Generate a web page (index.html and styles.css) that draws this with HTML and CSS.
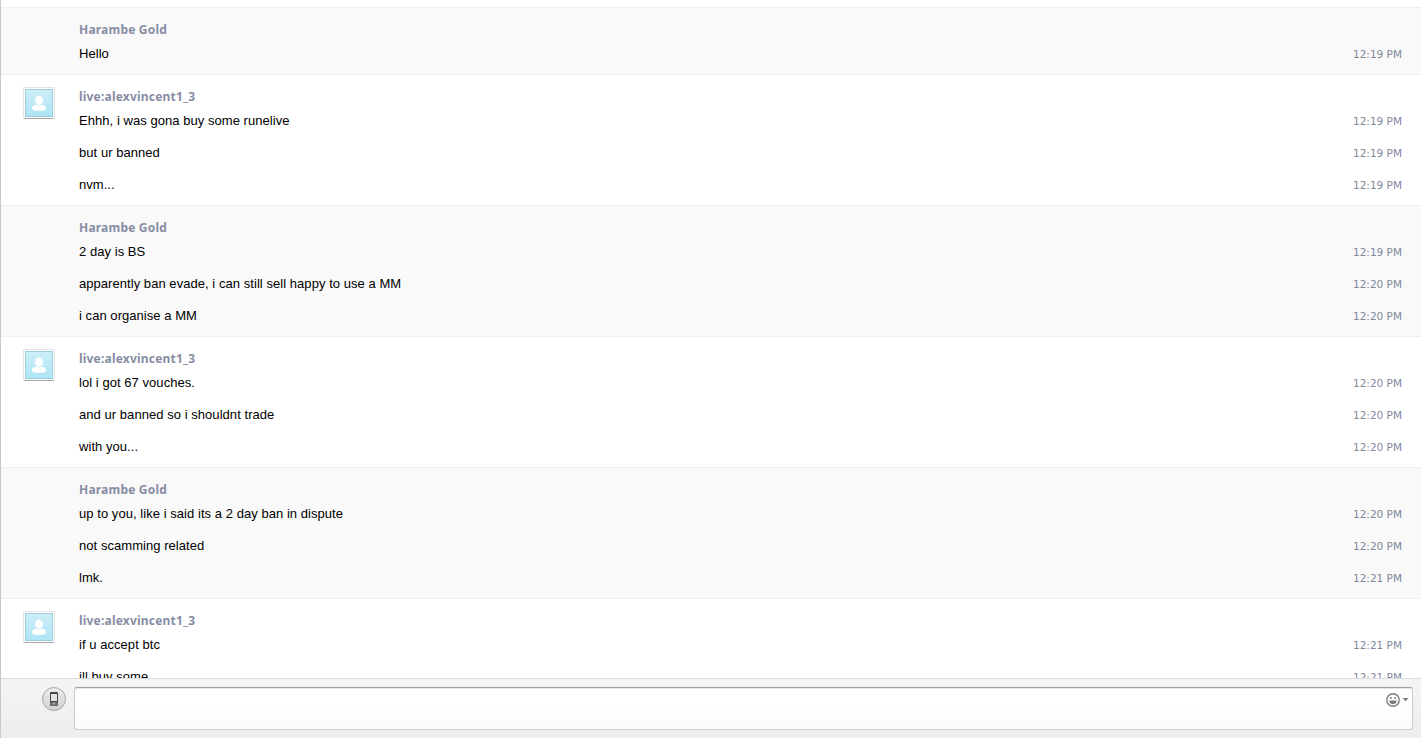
FILE: index.html
```html
<!DOCTYPE html>
<html>
<head>
  <meta charset="utf-8">
  <title>Chat</title>
  <link rel="stylesheet" href="styles.css">
</head>
<body>
  <svg class="symbols">
    <linearGradient id="sky" x1="0" y1="0" x2="0" y2="1">
      <stop offset="0" stop-color="#cdeef7"/>
      <stop offset="1" stop-color="#aee5f6"/>
    </linearGradient>
    <symbol id="person" viewBox="0 0 28 28">
      <rect x="0.5" y="0.5" width="27" height="27" fill="url(#sky)" stroke="#98cddb"/>
      <ellipse cx="14" cy="11.3" rx="4" ry="4.7" fill="#fff"/>
      <path d="M7 19.2c0-2.500 2.500-3.200 4.800-3.400 1.500 1 2.900 1 4.400 0 2.300.2 4.800.9 4.800 3.400 0 1.600-1.500 2.600-7 2.600s-7-1-7-2.600z" fill="#fff"/>
    </symbol>
  </svg>

  <div class="chat">
    <div class="messages">
      <div class="group other">
        <div class="avatar"></div>
        <div class="content">
          <div class="name">Harambe Gold</div>
          <div class="row"><span class="text">Hello</span><span class="time">12:19 PM</span></div>
        </div>
      </div>
      <div class="group">
        <div class="avatar"><svg class="photo"><use href="#person"/></svg></div>
        <div class="content">
          <div class="name">live:alexvincent1_3</div>
          <div class="row"><span class="text">Ehhh, i was gona buy some runelive</span><span class="time">12:19 PM</span></div>
          <div class="row"><span class="text">but ur banned</span><span class="time">12:19 PM</span></div>
          <div class="row"><span class="text">nvm...</span><span class="time">12:19 PM</span></div>
        </div>
      </div>
      <div class="group other">
        <div class="avatar"></div>
        <div class="content">
          <div class="name">Harambe Gold</div>
          <div class="row"><span class="text">2 day is BS</span><span class="time">12:19 PM</span></div>
          <div class="row"><span class="text">apparently ban evade, i can still sell happy to use a MM</span><span class="time">12:20 PM</span></div>
          <div class="row"><span class="text">i can organise a MM</span><span class="time">12:20 PM</span></div>
        </div>
      </div>
      <div class="group">
        <div class="avatar"><svg class="photo"><use href="#person"/></svg></div>
        <div class="content">
          <div class="name">live:alexvincent1_3</div>
          <div class="row"><span class="text">lol i got 67 vouches.</span><span class="time">12:20 PM</span></div>
          <div class="row"><span class="text">and ur banned so i shouldnt trade</span><span class="time">12:20 PM</span></div>
          <div class="row"><span class="text">with you...</span><span class="time">12:20 PM</span></div>
        </div>
      </div>
      <div class="group other">
        <div class="avatar"></div>
        <div class="content">
          <div class="name">Harambe Gold</div>
          <div class="row"><span class="text">up to you, like i said its a 2 day ban in dispute</span><span class="time">12:20 PM</span></div>
          <div class="row"><span class="text">not scamming related</span><span class="time">12:20 PM</span></div>
          <div class="row"><span class="text">lmk.</span><span class="time">12:21 PM</span></div>
        </div>
      </div>
      <div class="group">
        <div class="avatar"><svg class="photo"><use href="#person"/></svg></div>
        <div class="content">
          <div class="name">live:alexvincent1_3</div>
          <div class="row"><span class="text">if u accept btc</span><span class="time">12:21 PM</span></div>
          <div class="row"><span class="text">ill buy some</span><span class="time">12:21 PM</span></div>
        </div>
      </div>
    </div>

    <div class="composer">
      <button class="phone">
        <svg width="8" height="14" viewBox="0 0 8 14">
          <rect width="8" height="14" rx="1.300" fill="#454545"/>
          <rect x="1" y="2" width="6" height="7" fill="#e2e2e2"/>
          <rect y="10" width="8" height="4" rx="1" fill="#6c6c6c"/>
          <circle cx="4" cy="11.500" r="1" fill="#bbb"/>
        </svg>
      </button>
      <div class="input">
        <svg width="23" height="14" viewBox="0 0 23 14">
          <circle cx="7" cy="7" r="6.200" fill="none" stroke="#7c7c7c" stroke-width="1.400"/>
          <circle cx="4.900" cy="4.900" r="1" fill="#7c7c7c"/>
          <circle cx="9.100" cy="4.900" r="1" fill="#7c7c7c"/>
          <path d="M3.300 7.500h7.400c0 2.200-1.600 3.700-3.700 3.700s-3.700-1.500-3.700-3.700z" fill="#7c7c7c"/>
          <path d="M16.500 5h6l-3 3.300z" fill="#7c7c7c"/>
        </svg>
      </div>
    </div>
  </div>
</body>
</html>
```

FILE: styles.css
```css
body {
  margin: 0;
  background-color: #fff;
  font-family: "Liberation Sans", Arial, sans-serif;
}

.symbols {
  display: block;
  width: 0;
  height: 0;
}

.chat {
  display: flex;
  flex-direction: column;
  box-sizing: border-box;
  height: 738px;
  border-left: 1px solid #c8c8c8;
  overflow: hidden;
}

.messages {
  flex: 1;
  min-height: 0;
  padding-top: 7px;
  box-sizing: border-box;
  overflow: hidden;
}

.group {
  display: flex;
  border-top: 1px solid #eee;
  padding-bottom: 4px;
}

.group.other {
  background-color: #f9f9f9;
}

.avatar {
  flex: none;
  width: 56px;
  padding: 12px 0 0 22px;
  box-sizing: border-box;
  margin-right: 22px;
}

.photo {
  display: block;
  width: 28px;
  height: 28px;
  padding: 1px;
  background-color: #fff;
  border: 1px solid #e4e4e4;
  border-bottom-color: #a8a8a8;
  border-radius: 2px;
}

.content {
  flex: 1;
  padding-right: 19px;
}

.name {
  height: 30px;
  line-height: 43px;
  font-family: "Noto Sans", sans-serif;
  font-size: 12px;
  font-weight: bold;
  letter-spacing: 0.2px;
  color: #868da3;
}

.row {
  display: flex;
  justify-content: space-between;
  height: 32px;
  line-height: 32px;
}

.text {
  font-size: 13px;
  letter-spacing: 0.05px;
  color: #000;
}

.time {
  font-family: "DejaVu Sans", sans-serif;
  font-size: 10.5px;
  color: #7f879b;
}

.composer {
  flex: none;
  display: flex;
  align-items: flex-start;
  height: 60px;
  padding: 8px 8px 0 41px;
  box-sizing: border-box;
  border-top: 1px solid #dcdcdc;
  background: linear-gradient(#f4f4f4, #ededed);
}

.phone {
  display: flex;
  align-items: center;
  justify-content: center;
  width: 24px;
  height: 24px;
  margin-right: 8px;
  padding: 0;
  border: 1px solid #a6a6a6;
  border-radius: 50%;
  background: linear-gradient(#ececec, #d2d2d2);
}

.input {
  flex: 1;
  display: flex;
  justify-content: flex-end;
  height: 43px;
  padding: 5px 3px 0 0;
  box-sizing: border-box;
  border: 1px solid #cbcbcb;
  border-top-color: #9e9e9e;
  border-radius: 3px;
  background: linear-gradient(#fff 40%, #fbfbfb);
  box-shadow: inset 0 1px 0 #e6e6e6;
}
```
